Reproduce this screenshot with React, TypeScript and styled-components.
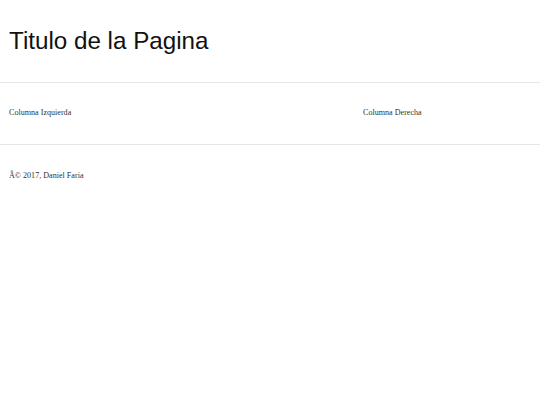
import React from "react";
import styled, { createGlobalStyle } from "styled-components";

const Global = createGlobalStyle`
  html, body { margin: 0; padding: 0; background: #ffffff; }
  body { font-family: "Liberation Serif", "Times New Roman", serif; color: #222; }
`;

const Header = styled.header`
  height: 83px;
  box-sizing: border-box;
  padding: 27px 9px 0;
  border-bottom: 1px solid #e6e6e6;
`;

const Title = styled.h1`
  margin: 0;
  font-family: "Liberation Sans", Arial, sans-serif;
  font-weight: 400;
  font-size: 24.2px;
  line-height: 27px;
  color: #111;
`;

const Main = styled.main`
  display: grid;
  grid-template-columns: 1fr 168px;
  height: 62px;
  box-sizing: border-box;
  padding: 25px 9px 0;
  border-bottom: 1px solid #e6e6e6;
`;

const Column = styled.section`
  font-size: 8.1px;
  line-height: 10px;
  color: #333;
`;

const Footer = styled.footer`
  padding: 26px 9px 0;
  font-size: 8.1px;
  line-height: 10px;
  color: #333;
`;

export default function App() {
  return (
    <>
      <Global />
      <Header>
        <Title>Titulo de la Pagina</Title>
      </Header>
      <Main>
        <Column>Columna Izquierda</Column>
        <Column>Columna Derecha</Column>
      </Main>
      <Footer>Â© 2017, Daniel Faria</Footer>
    </>
  );
}
